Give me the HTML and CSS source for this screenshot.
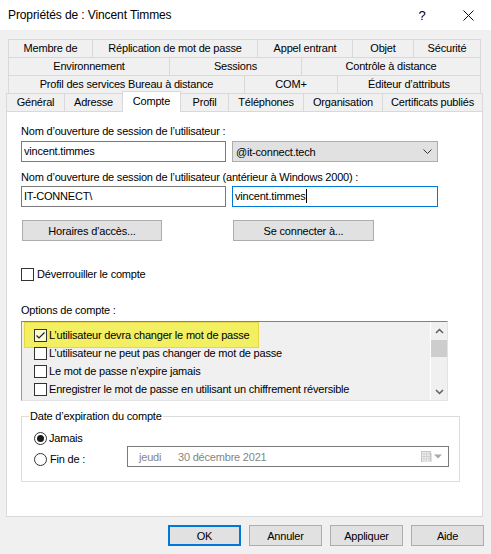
FILE: index.html
```html
<!DOCTYPE html>
<html lang="fr">
<head>
<meta charset="utf-8">
<title>Propriétés de : Vincent Timmes</title>
<link rel="stylesheet" href="styles.css">
</head>
<body>
<div class="window">
  <header class="titlebar">
    <span class="title">Propriétés de : Vincent Timmes</span>
    <span class="tb-btn help">?</span>
    <span class="tb-btn close"><svg width="11" height="11" viewBox="0 0 11 11"><path d="M0.5 0.5 L10.5 10.5 M10.5 0.5 L0.5 10.5" stroke="#111" stroke-width="1" fill="none"/></svg></span>
  </header>

  <div class="dlg">
    <nav class="tabs">
      <div class="tabrow r1">
        <div class="tab">Membre de</div>
        <div class="tab">Réplication de mot de passe</div>
        <div class="tab">Appel entrant</div>
        <div class="tab">Objet</div>
        <div class="tab">Sécurité</div>
      </div>
      <div class="tabrow r2">
        <div class="tab">Environnement</div>
        <div class="tab">Sessions</div>
        <div class="tab">Contrôle à distance</div>
      </div>
      <div class="tabrow r3">
        <div class="tab">Profil des services Bureau à distance</div>
        <div class="tab">COM+</div>
        <div class="tab">Éditeur d’attributs</div>
      </div>
      <div class="tabrow r4">
        <div class="tab">Général</div>
        <div class="tab">Adresse</div>
        <div class="tab active">Compte</div>
        <div class="tab">Profil</div>
        <div class="tab">Téléphones</div>
        <div class="tab">Organisation</div>
        <div class="tab">Certificats publiés</div>
      </div>
    </nav>

    <section class="panel">
      <div class="lbl l1">Nom d’ouverture de session de l’utilisateur :</div>
      <div class="fieldrow fr1">
        <div class="field">vincent.timmes</div>
        <div class="select">
          <span>@it-connect.tech</span>
          <svg width="9" height="5" viewBox="0 0 9 5"><path d="M0.5 0.5 L4.5 4.5 L8.5 0.5" stroke="#333" stroke-width="1" fill="none"/></svg>
        </div>
      </div>

      <div class="lbl l2">Nom d’ouverture de session de l’utilisateur (antérieur à Windows 2000) :</div>
      <div class="fieldrow fr2">
        <div class="field">IT-CONNECT\</div>
        <div class="field focus">vincent.timmes<span class="caret"></span></div>
      </div>

      <div class="btnrow">
        <div class="btn b-hours">Horaires d’accès...</div>
        <div class="btn b-connect">Se connecter à...</div>
      </div>

      <div class="check-line">
        <span class="cb"></span>
        <span>Déverrouiller le compte</span>
      </div>

      <div class="lbl l3">Options de compte :</div>
      <div class="listbox">
        <div class="items">
          <div class="item hl">
            <span class="cb checked"><svg width="11" height="11" viewBox="0 0 11 11"><path d="M1.5 5.5 L4 8 L9.5 2.5" stroke="#222" stroke-width="1.2" fill="none"/></svg></span>
            <span>L’utilisateur devra changer le mot de passe</span>
          </div>
          <div class="item">
            <span class="cb"></span>
            <span>L’utilisateur ne peut pas changer de mot de passe</span>
          </div>
          <div class="item">
            <span class="cb"></span>
            <span>Le mot de passe n’expire jamais</span>
          </div>
          <div class="item">
            <span class="cb"></span>
            <span>Enregistrer le mot de passe en utilisant un chiffrement réversible</span>
          </div>
        </div>
        <div class="scrollbar">
          <div class="sb-arrow"><svg width="9" height="6" viewBox="0 0 9 6"><path d="M1 5 L4.5 1.5 L8 5" stroke="#606060" stroke-width="1.5" fill="none"/></svg></div>
          <div class="thumb"></div>
          <div class="sb-space"></div>
          <div class="sb-arrow"><svg width="9" height="6" viewBox="0 0 9 6"><path d="M1 1 L4.5 4.5 L8 1" stroke="#606060" stroke-width="1.5" fill="none"/></svg></div>
        </div>
      </div>

      <fieldset class="group">
        <legend>Date d’expiration du compte</legend>
        <div class="group-body">
          <div class="radio-row">
            <span class="radio on"></span>
            <span>Jamais</span>
          </div>
          <div class="fin-row">
            <div class="radio-row fin">
              <span class="radio"></span>
              <span class="fin-text">Fin de :</span>
            </div>
            <div class="date">
              <span class="day">jeudi</span>
              <span>30 décembre 2021</span>
              <span class="cal">
                <svg width="11" height="11" viewBox="0 0 11 11">
                  <rect x="0.5" y="0.5" width="9" height="10" fill="#f4f4f4" stroke="#c4c4c4"/>
                  <path d="M0.5 3 H9.5 M0.5 5.5 H9.5 M0.5 8 H9.5 M3 0.5 V10.5 M5.5 0.5 V10.5 M8 0.5 V10.5" stroke="#d0d0d0" stroke-width="1"/>
                  <path d="M10.5 2 V10.5 H1.5" stroke="#e0e0e0" fill="none"/>
                </svg>
                <svg width="8" height="5" viewBox="0 0 8 5"><path d="M0 0.5 H8 L4 4.5 Z" fill="#a8a8a8"/></svg>
              </span>
            </div>
          </div>
        </div>
      </fieldset>
    </section>
  </div>

  <footer class="buttons">
    <div class="btn dbtn ok">OK</div>
    <div class="btn dbtn">Annuler</div>
    <div class="btn dbtn">Appliquer</div>
    <div class="btn dbtn">Aide</div>
  </footer>
</div>
</body>
</html>
```

FILE: styles.css
```css
* { box-sizing: border-box; }
html, body { margin: 0; padding: 0; }
body {
  width: 491px;
  height: 554px;
  overflow: hidden;
  background: #f0f0f0;
  font-family: "Liberation Sans", Arial, sans-serif;
  font-size: 11px;
  letter-spacing: -0.2px;
  color: #000;
}

.titlebar {
  height: 30px;
  background: #fff;
  display: flex;
  align-items: center;
}
.title {
  flex: 1;
  padding-left: 8px;
  font-size: 12px;
  letter-spacing: -0.1px;
}
.tb-btn {
  width: 46px;
  height: 30px;
  display: flex;
  align-items: center;
  justify-content: center;
}
.help { font-size: 13px; letter-spacing: 0; }

.dlg { padding: 9px 8px 0 6px; }

.tabrow {
  display: grid;
  height: 18px;
  border-right: 1px solid #d9d9d9;
}
.r1, .r2, .r3 { margin: 0 2px; }
.r1 { grid-template-columns: 84px 165px 95px 61px 1fr; }
.r2 { grid-template-columns: 161px 132px 1fr; }
.r3 { grid-template-columns: 236px 93px 1fr; }
.r4 { grid-template-columns: 58px 58px 58px 48px 75px 79px 1fr; }
.tab {
  border-top: 1px solid #d9d9d9;
  border-left: 1px solid #d9d9d9;
  text-align: center;
  line-height: 17px;
  white-space: nowrap;
  overflow: hidden;
}
.tab.active {
  background: #fff;
  margin-top: -2px;
  margin-right: -1px;
  height: 21px;
  line-height: 18px;
  border-right: 1px solid #d9d9d9;
  position: relative;
  z-index: 1;
}

.panel {
  height: 406px;
  background: #fff;
  border: 1px solid #d9d9d9;
  padding: 0 0 0 14px;
  display: flex;
  flex-direction: column;
  align-items: flex-start;
}
.lbl { height: 14px; line-height: 14px; white-space: nowrap; }
.l1 { margin-top: 12px; }
.l2 { margin-top: 8px; }
.l3 { margin-top: 22px; }

.fieldrow { display: flex; gap: 6px; }
.fr1 { margin-top: 3px; }
.fr2 { margin-top: 2px; }
.field {
  width: 205px;
  height: 21px;
  border: 1px solid #7a7a7a;
  background: #fff;
  padding-left: 2px;
  line-height: 19px;
  white-space: nowrap;
}
.field.focus { width: 206px; border-color: #0078d7; }
.caret {
  display: inline-block;
  width: 1px;
  height: 14px;
  background: #000;
  vertical-align: -3px;
}
.select {
  width: 206px;
  height: 21px;
  border: 1px solid #adadad;
  background: #e1e1e1;
  display: flex;
  align-items: center;
  justify-content: space-between;
  padding: 0 5px 0 3px;
}

.btnrow { display: flex; margin-top: 13px; }
.btn {
  height: 21px;
  border: 1px solid #adadad;
  background: #e1e1e1;
  display: flex;
  align-items: center;
  justify-content: center;
  white-space: nowrap;
}
.b-hours { width: 140px; margin-left: 1px; }
.b-connect { width: 141px; margin-left: 71px; }

.check-line {
  display: flex;
  align-items: center;
  gap: 3px;
  height: 14px;
  margin-top: 26px;
}
.cb {
  width: 13px;
  height: 13px;
  border: 1px solid #333;
  background: #fff;
  flex: none;
  display: flex;
  align-items: center;
  justify-content: center;
}
.cb.checked { background: #fbfbd6; }

.listbox {
  margin-top: 4px;
  width: 427px;
  height: 80px;
  display: flex;
  border-top: 1px solid #828282;
  border-left: 1px solid #9a9a9a;
  border-right: 1px solid #e3e3e3;
  border-bottom: 1px solid #e3e3e3;
  background: #f0f0f0;
  isolation: isolate;
}
.items { flex: 1; padding: 4px 0 0 12px; white-space: nowrap; }
.item {
  height: 18px;
  display: flex;
  align-items: center;
  gap: 2px;
  position: relative;
}
.item.hl::before {
  content: "";
  position: absolute;
  left: -10px;
  top: -4px;
  width: 233px;
  height: 24px;
  background: #f2ef62;
  border: 1px solid #e6d843;
  z-index: -1;
}
.scrollbar {
  width: 17px;
  border-left: 1px solid #fff;
  display: flex;
  flex-direction: column;
}
.sb-arrow {
  height: 17px;
  display: flex;
  align-items: center;
  justify-content: center;
}
.thumb { height: 17px; margin-top: 1px; background: #cdcdcd; }
.sb-space { flex: 1; }

.group {
  margin: 8px 0 0 0;
  padding: 0;
  width: 439px;
  border: 1px solid #dcdcdc;
  min-width: 0;
}
.group legend {
  padding: 0 1px;
  margin-left: 7px;
  line-height: 14px;
}
.group-body { padding: 8px 10px 14px 12px; }
.radio-row {
  display: flex;
  align-items: center;
  gap: 2px;
  height: 14px;
}
.radio {
  width: 13px;
  height: 13px;
  border: 1px solid #333;
  border-radius: 50%;
  background: #fff;
  display: flex;
  align-items: center;
  justify-content: center;
  flex: none;
}
.radio.on::after {
  content: "";
  width: 7px;
  height: 7px;
  border-radius: 50%;
  background: #1a1a1a;
}
.fin-row { display: flex; margin-top: 1px; }
.radio-row.fin { margin-top: 6px; }
.fin-text { margin-left: 1px; }
.date {
  width: 322px;
  height: 21px;
  margin-left: auto;
  border: 1px solid #7a7a7a;
  background: #fff;
  display: flex;
  align-items: center;
  padding: 0 6px 0 11px;
  color: #858585;
  white-space: nowrap;
}
.day { width: 39px; }
.cal {
  margin-left: auto;
  display: flex;
  align-items: center;
  gap: 2px;
}

.buttons {
  display: flex;
  justify-content: flex-end;
  gap: 8px;
  padding: 8px 7px 0 0;
}
.dbtn { width: 73px; }
.ok { border: 2px solid #0078d7; }
```
